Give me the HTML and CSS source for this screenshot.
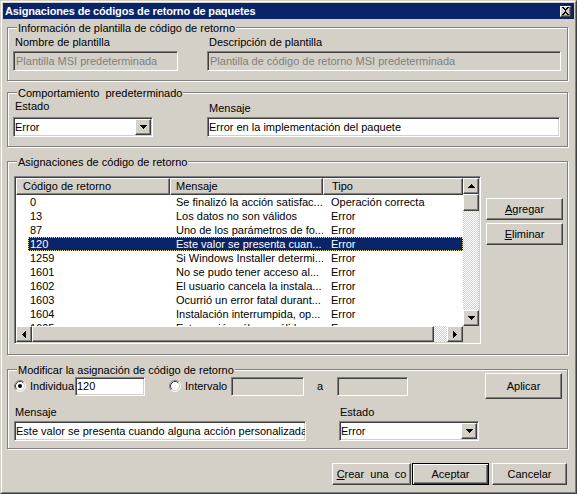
FILE: index.html
```html
<!DOCTYPE html>
<html lang="es">
<head>
<meta charset="utf-8">
<title>Asignaciones de códigos de retorno de paquetes</title>
<link rel="stylesheet" href="styles.css">
</head>
<body>
<div class="window">
  <div class="frame">
    <div class="titlebar">
      <span class="title">Asignaciones de códigos de retorno de paquetes</span>
      <span class="close"><svg width="9" height="8" viewBox="0 0 9 8"><path d="M1 0h2v1h1v1h1V1h1V0h2v1H7v1H6v1H5v2h1v1h1v1h1v1H6V7H5V6H4v1H3v1H1V7h1V6h1V5h1V3H3V2H2V1H1z" fill="#000"/></svg></span>
    </div>
    <div class="client">

      <div class="group g1">
        <span class="glabel">Información de plantilla de código de retorno</span>
        <div class="g1-grid">
          <div class="field">
            <div class="lbl">Nombre de plantilla</div>
            <div class="edit disabled">Plantilla MSI predeterminada</div>
          </div>
          <div class="field">
            <div class="lbl">Descripción de plantilla</div>
            <div class="edit disabled">Plantilla de código de retorno MSI predeterminada</div>
          </div>
        </div>
      </div>

      <div class="group g2">
        <span class="glabel">Comportamiento&nbsp; predeterminado</span>
        <div class="g2-row">
          <div class="field f-estado">
            <div class="lbl">Estado</div>
            <div class="combo">
              <span class="combo-text">Error</span>
              <span class="combo-btn"><svg width="7" height="4" viewBox="0 0 7 4"><path d="M0 0h7v1h-1v1h-1v1h-1v1h-1V3h-1V2h-1V1H0z" fill="#000"/></svg></span>
            </div>
          </div>
          <div class="field f-mensaje">
            <div class="lbl lbl-low">Mensaje</div>
            <div class="edit">Error en la implementación del paquete</div>
          </div>
        </div>
      </div>

      <div class="group g3">
        <span class="glabel">Asignaciones de código de retorno</span>
        <div class="g3-row">
          <div class="listview">
            <div class="lv-main">
              <div class="lv-header">
                <div class="hcell h1">Código de retorno</div>
                <div class="hcell h2">Mensaje</div>
                <div class="hcell h3">Tipo</div>
              </div>
              <div class="lv-body">
                <div class="lv-row"><span class="c-code">0</span><span class="c-msg">Se finalizó la acción satisfac...</span><span class="c-type">Operación correcta</span></div>
                <div class="lv-row"><span class="c-code">13</span><span class="c-msg">Los datos no son válidos</span><span class="c-type">Error</span></div>
                <div class="lv-row"><span class="c-code">87</span><span class="c-msg">Uno de los parámetros de fo...</span><span class="c-type">Error</span></div>
                <div class="lv-row selected"><span class="c-code">120</span><span class="c-msg">Este valor se presenta cuan...</span><span class="c-type">Error</span></div>
                <div class="lv-row"><span class="c-code">1259</span><span class="c-msg">Si Windows Installer determi...</span><span class="c-type">Error</span></div>
                <div class="lv-row"><span class="c-code">1601</span><span class="c-msg">No se pudo tener acceso al...</span><span class="c-type">Error</span></div>
                <div class="lv-row"><span class="c-code">1602</span><span class="c-msg">El usuario cancela la instala...</span><span class="c-type">Error</span></div>
                <div class="lv-row"><span class="c-code">1603</span><span class="c-msg">Ocurrió un error fatal durant...</span><span class="c-type">Error</span></div>
                <div class="lv-row"><span class="c-code">1604</span><span class="c-msg">Instalación interrumpida, op...</span><span class="c-type">Error</span></div>
                <div class="lv-row"><span class="c-code">1605</span><span class="c-msg">Esta acción sólo es válida...</span><span class="c-type">Error</span></div>
              </div>
            </div>
            <div class="vscroll">
              <div class="sbtn"><svg width="7" height="4" viewBox="0 0 7 4"><path d="M3 0h1v1h1v1h1v1h1v1H0V3h1V2h1V1h1z" fill="#000"/></svg></div>
              <div class="thumb vthumb"></div>
              <div class="track"></div>
              <div class="sbtn"><svg width="7" height="4" viewBox="0 0 7 4"><path d="M0 0h7v1h-1v1h-1v1h-1v1h-1V3h-1V2h-1V1H0z" fill="#000"/></svg></div>
            </div>
            <div class="hscroll">
              <div class="sbtn"><svg width="4" height="7" viewBox="0 0 4 7"><path d="M3 0h1v7h-1v-1h-1v-1h-1v-1h-1v-1h1v-1h1v-1h1z" fill="#000"/></svg></div>
              <div class="thumb hthumb"></div>
              <div class="track"></div>
              <div class="sbtn"><svg width="4" height="7" viewBox="0 0 4 7"><path d="M0 0h1v1h1v1h1v1h1v1h-1v1h-1v1h-1v1H0z" fill="#000"/></svg></div>
            </div>
            <div class="corner"></div>
          </div>
          <div class="side-buttons">
            <div class="btn b-side"><u>A</u>gregar</div>
            <div class="btn b-side"><u>E</u>liminar</div>
          </div>
        </div>
      </div>

      <div class="group g4">
        <span class="glabel">Modificar la asignación de código de retorno</span>
        <div class="g4-row1">
          <span class="radio"><svg width="12" height="12" viewBox="0 0 12 12"><circle cx="6" cy="6" r="5" fill="#fff"/><path d="M2.11 9.89A5.5 5.5 0 0 1 9.89 2.11" fill="none" stroke="#808080"/><path d="M9.89 2.11A5.5 5.5 0 0 1 2.11 9.89" fill="none" stroke="#fff"/><path d="M2.82 9.18A4.5 4.5 0 0 1 9.18 2.82" fill="none" stroke="#404040"/><path d="M9.18 2.82A4.5 4.5 0 0 1 2.82 9.18" fill="none" stroke="#d4d0c8"/><circle cx="6" cy="6" r="2" fill="#000"/></svg></span>
          <span class="rlabel r-ind">Individual</span>
          <div class="edit e-ind">120</div>
          <span class="radio r2"><svg width="12" height="12" viewBox="0 0 12 12"><circle cx="6" cy="6" r="5" fill="#fff"/><path d="M2.11 9.89A5.5 5.5 0 0 1 9.89 2.11" fill="none" stroke="#808080"/><path d="M9.89 2.11A5.5 5.5 0 0 1 2.11 9.89" fill="none" stroke="#fff"/><path d="M2.82 9.18A4.5 4.5 0 0 1 9.18 2.82" fill="none" stroke="#404040"/><path d="M9.18 2.82A4.5 4.5 0 0 1 2.82 9.18" fill="none" stroke="#d4d0c8"/></svg></span>
          <span class="rlabel r-int">Intervalo</span>
          <div class="edit disabled e-int"></div>
          <span class="a-label">a</span>
          <div class="edit disabled e-to"></div>
          <div class="btn b-apply">Aplicar</div>
        </div>
        <div class="g4-grid">
          <div class="lbl">Mensaje</div>
          <div class="lbl">Estado</div>
          <div class="edit">Este valor se presenta cuando alguna acción personalizada</div>
          <div class="combo">
            <span class="combo-text">Error</span>
            <span class="combo-btn"><svg width="7" height="4" viewBox="0 0 7 4"><path d="M0 0h7v1h-1v1h-1v1h-1v1h-1V3h-1V2h-1V1H0z" fill="#000"/></svg></span>
          </div>
        </div>
      </div>

      <div class="bottom-row">
        <div class="btn b-create"><u>C</u>rear&nbsp; una&nbsp; co</div>
        <div class="btn default b-ok">Aceptar</div>
        <div class="btn b-cancel">Cancelar</div>
      </div>

    </div>
  </div>
</div>
</body>
</html>
```

FILE: styles.css
```css
* { box-sizing: border-box; }

html, body {
  margin: 0;
  padding: 0;
}

body {
  width: 577px;
  height: 494px;
  overflow: hidden;
  background: #d4d0c8;
  font-family: "Liberation Sans Narrow", "Arial Narrow", "Liberation Sans", sans-serif;
  font-size: 11px;
  line-height: 13px;
  color: #000;
}

.window {
  width: 577px;
  height: 494px;
  border: 1px solid;
  border-color: #d4d0c8 #404040 #404040 #d4d0c8;
  background: #d4d0c8;
}

.frame {
  height: 100%;
  border: 1px solid;
  border-color: #fff #808080 #808080 #fff;
  padding: 1px;
  display: flex;
  flex-direction: column;
}

.titlebar {
  height: 16px;
  flex: none;
  background: #0a246a;
  color: #fff;
  display: flex;
  align-items: center;
  padding: 0 2px 0 2px;
}

.title {
  flex: 1;
  font-weight: bold;
  font-size: 11px;
  letter-spacing: -0.15px;
  white-space: nowrap;
}

.close {
  width: 11px;
  height: 11px;
  background: #d4d0c8;
  border: 1px solid;
  border-color: #fff #404040 #404040 #fff;
  box-shadow: inset -1px -1px 0 #808080;
  display: flex;
  align-items: center;
  justify-content: center;
  margin-right: 1px;
}

.client {
  flex: 1;
  padding: 0 6px 0 4px;
}

/* Group boxes */
.group {
  position: relative;
  width: 561px;
  border: 1px solid #808080;
  box-shadow: inset 1px 1px 0 #fff, 1px 1px 0 #fff;
}

.glabel {
  position: absolute;
  top: -6px;
  left: 9px;
  padding: 0 1px;
  background: #d4d0c8;
  white-space: nowrap;
  line-height: 13px;
}

.g1 {
  margin-top: 8px;
  height: 54px;
  padding: 8px 0 0 5px;
}

.g1-grid {
  display: grid;
  grid-template-columns: 165px 354px;
  column-gap: 29px;
}

.field {
  display: flex;
  flex-direction: column;
}

.lbl {
  height: 13px;
  padding-left: 2px;
  white-space: nowrap;
}

.g1 .lbl { margin-bottom: 2px; }

.g2 {
  margin-top: 11px;
  height: 55px;
  padding: 7px 0 0 5px;
}

.g2-row {
  display: flex;
}

.f-estado { width: 140px; }
.f-estado .lbl { margin-bottom: 4px; }

.f-mensaje {
  width: 353px;
  margin-left: 54px;
}

.lbl-low {
  height: 15px;
  padding-top: 2px;
  margin-bottom: 2px;
}

.g3 {
  margin-top: 14px;
  height: 194px;
  padding: 14px 0 0 6px;
}

.g3-row {
  display: flex;
  align-items: flex-start;
}

.side-buttons {
  margin-left: 5px;
  margin-top: 22px;
  display: flex;
  flex-direction: column;
  gap: 3px;
}

.g4 {
  margin-top: 14px;
  height: 80px;
  padding: 3px 5px 0 6px;
}

/* Controls */
.edit {
  height: 20px;
  border: 1px solid;
  border-color: #808080 #fff #fff #808080;
  box-shadow: inset 1px 1px 0 #404040, inset -1px -1px 0 #d4d0c8;
  background: #fff;
  padding: 0 1px;
  line-height: 18px;
  white-space: nowrap;
  overflow: hidden;
}

.edit.disabled {
  background: #d4d0c8;
  color: #808080;
  padding-left: 2px;
}

.combo {
  height: 20px;
  border: 1px solid;
  border-color: #808080 #fff #fff #808080;
  box-shadow: inset 1px 1px 0 #404040, inset -1px -1px 0 #d4d0c8;
  background: #fff;
  padding: 1px;
  display: flex;
}

.combo-text {
  flex: 1;
  line-height: 16px;
  padding-left: 0;
}

.combo-btn {
  width: 16px;
  height: 16px;
  background: #d4d0c8;
  border: 1px solid;
  border-color: #fff #404040 #404040 #fff;
  box-shadow: inset -1px -1px 0 #808080;
  display: flex;
  align-items: center;
  justify-content: center;
}

.btn {
  background: #d4d0c8;
  border: 1px solid;
  border-color: #fff #404040 #404040 #fff;
  box-shadow: inset -1px -1px 0 #808080;
  display: flex;
  align-items: center;
  justify-content: center;
  white-space: nowrap;
}

.btn.default {
  border-color: #000;
  box-shadow: inset 1px 1px 0 #fff, inset -1px -1px 0 #404040, inset -2px -2px 0 #808080;
}

.b-side {
  width: 77px;
  height: 22px;
}

.b-apply {
  width: 77px;
  height: 26px;
  margin-left: auto;
}

/* List view */
.listview {
  width: 467px;
  height: 168px;
  border: 1px solid;
  border-color: #808080 #fff #fff #808080;
  box-shadow: inset 1px 1px 0 #404040, inset -1px -1px 0 #d4d0c8;
  padding: 1px;
  display: grid;
  grid-template-columns: 447px 16px;
  grid-template-rows: 148px 16px;
}

.lv-main {
  display: flex;
  flex-direction: column;
  background: #fff;
  overflow: hidden;
}

.lv-header {
  display: flex;
  height: 17px;
  flex: none;
}

.hcell {
  height: 17px;
  background: #d4d0c8;
  border: 1px solid;
  border-color: #fff #404040 #404040 #fff;
  box-shadow: inset -1px -1px 0 #808080;
  line-height: 15px;
  white-space: nowrap;
}

.h1 { width: 154px; padding-left: 6px; }
.h2 { width: 153px; padding-left: 5px; }
.h3 { width: 140px; padding-left: 8px; }

.lv-body {
  height: 131px;
  overflow: hidden;
}

.lv-row {
  display: flex;
  height: 14px;
  line-height: 14px;
  margin-left: 12px;
  white-space: nowrap;
}

.lv-row.selected {
  background: #0a246a;
  color: #fff;
  outline: 1px dotted #e6d690;
  outline-offset: -1px;
}

.c-code { width: 142px; padding-left: 2px; }
.c-msg { width: 153px; padding-left: 6px; overflow: hidden; }
.c-type { width: 140px; padding-left: 8px; }

.vscroll {
  display: flex;
  flex-direction: column;
}

.hscroll {
  display: flex;
}

.sbtn {
  width: 16px;
  height: 16px;
  flex: none;
  background: #d4d0c8;
  border: 1px solid;
  border-color: #fff #404040 #404040 #fff;
  box-shadow: inset -1px -1px 0 #808080;
  display: flex;
  align-items: center;
  justify-content: center;
}

.thumb {
  flex: none;
  background: #d4d0c8;
  border: 1px solid;
  border-color: #fff #404040 #404040 #fff;
  box-shadow: inset -1px -1px 0 #808080;
}

.vthumb { width: 16px; height: 17px; }
.hthumb { width: 402px; height: 16px; }

.track {
  flex: 1;
  background: repeating-conic-gradient(#d4d0c8 0 25%, #fff 0 50%) 0 0 / 2px 2px;
}

.corner {
  background: #d4d0c8;
}

/* Group 4 */
.g4-row1 {
  display: flex;
  align-items: center;
  height: 26px;
}

.radio {
  width: 12px;
  height: 12px;
  display: block;
  margin-right: 4px;
}

.radio svg { display: block; }

.r2 { margin-left: 24px; }

.rlabel {
  width: 46px;
  overflow: hidden;
  white-space: nowrap;
}

.r-ind { width: 44px; margin-right: 1px; }

.e-ind { width: 70px; height: 19px; line-height: 17px; }
.e-int { width: 73px; height: 19px; }
.e-to { width: 71px; height: 19px; }

.a-label {
  width: 20px;
  margin-left: 13px;
}

.g4-grid {
  margin-top: 7px;
  display: grid;
  grid-template-columns: 292px 140px;
  column-gap: 33px;
  row-gap: 2px;
}

.g4-grid .lbl { padding-left: 1px; }

/* Bottom buttons */
.bottom-row {
  margin-top: 14px;
  display: flex;
  justify-content: flex-end;
  padding-right: 1px;
}

.b-create { width: 79px; height: 22px; }
.b-ok { width: 77px; height: 22px; margin-left: 1px; }
.b-cancel { width: 75px; height: 22px; margin-left: 3px; }
```
